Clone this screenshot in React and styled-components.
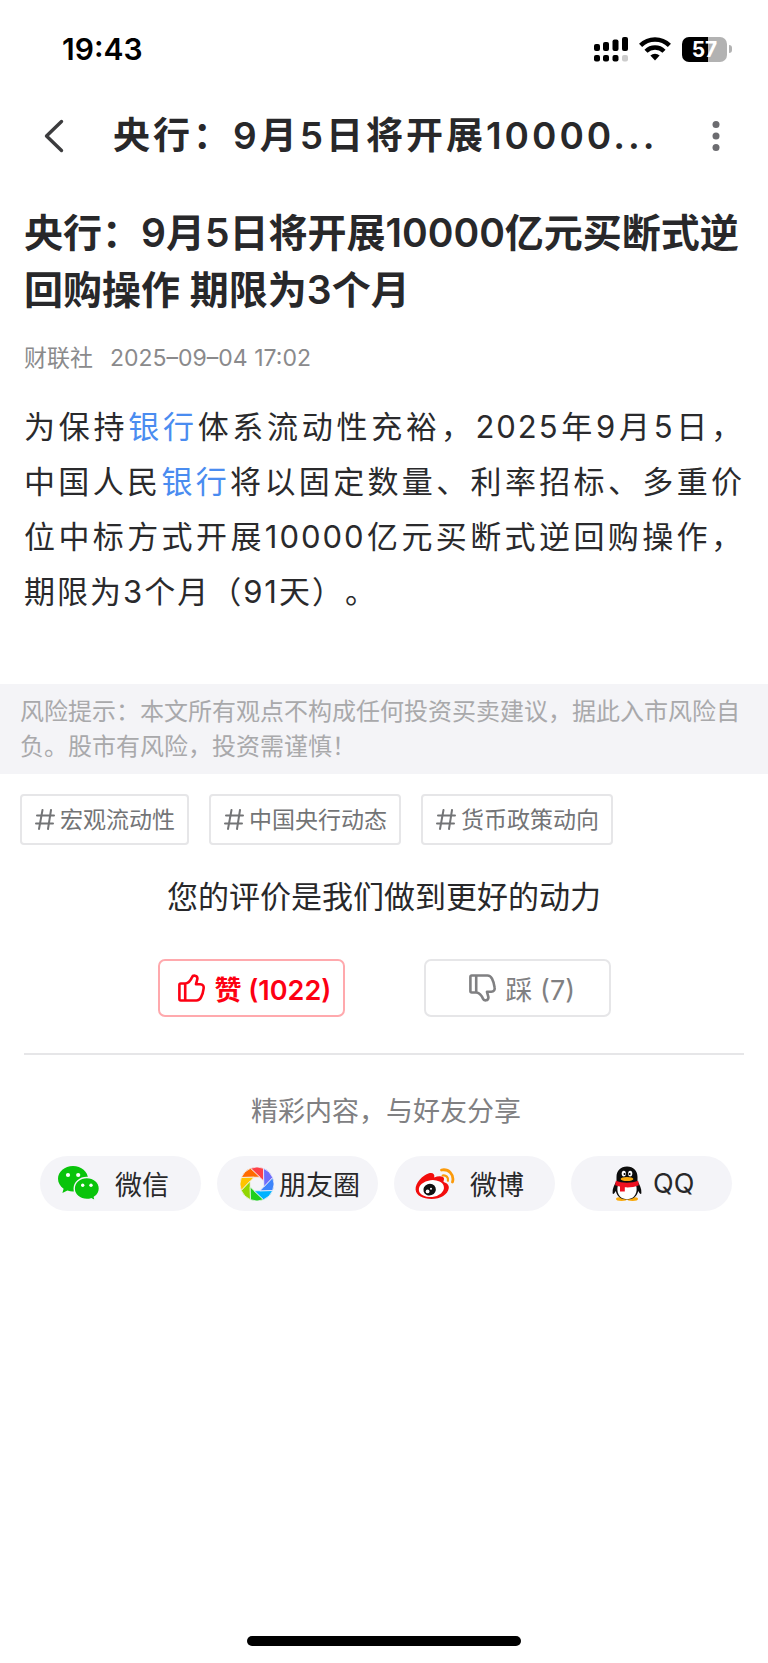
import React from "react";
import styled, { createGlobalStyle } from "styled-components";

const title = "央行：9月5日将开展10000亿元买断式逆回购操作 期限为3个月";
const tags = ["宏观流动性", "中国央行动态", "货币政策动向"];

const GlobalStyle = createGlobalStyle`
  * {
    box-sizing: border-box;
  }
  body {
    margin: 0;
    background: #fff;
    color: #28282a;
    font-family: Inter, "Noto Sans CJK SC", sans-serif;
    text-spacing-trim: space-all;
  }
  h1, h2, p {
    margin: 0;
    font-weight: 400;
  }
  button {
    font-family: inherit;
    color: inherit;
    cursor: pointer;
  }
  svg {
    display: block;
    flex: none;
  }
`;

const SignalIcon = () => (
  <svg width="34" height="25" viewBox="0 0 34 25">
    <rect x="0" y="7" width="6" height="7" rx="2" />
    <rect x="9" y="5" width="6" height="9" rx="2" />
    <rect x="18.5" y="2.5" width="6" height="11.5" rx="2" />
    <rect x="28" y="0" width="6" height="14" rx="2" />
    <rect x="0" y="18" width="6" height="6.5" rx="2" />
    <rect x="9" y="18" width="6" height="6.5" rx="2" />
    <rect x="18.5" y="18" width="6" height="6.5" rx="2" />
    <rect x="28" y="18" width="6" height="6.5" rx="2" fill="#ccc" />
  </svg>
);

const WifiIcon = () => (
  <svg width="32" height="24" viewBox="0 0 32 24">
    <g fill="none" stroke="#000" strokeWidth="4.4">
      <path d="M1.6 8.4a20.4 20.4 0 0 1 28.8 0" />
      <path d="M7 14.2a12.8 12.8 0 0 1 18 0" />
    </g>
    <path d="M11.4 18.5a6.6 6.6 0 0 1 9.2 0L16 23.4z" />
  </svg>
);

const BackIcon = () => (
  <svg width="20" height="34" viewBox="0 0 20 34">
    <path d="M17.5 2.5 2.5 17l15 14.5" fill="none" stroke="#3c3c3e" strokeWidth="3.4" strokeLinecap="round" strokeLinejoin="round" />
  </svg>
);

const MoreIcon = () => (
  <svg width="8" height="32" viewBox="0 0 8 32" fill="#6c6c70">
    <circle cx="4" cy="4.5" r="3.5" />
    <circle cx="4" cy="16" r="3.5" />
    <circle cx="4" cy="27.5" r="3.5" />
  </svg>
);

const HashIcon = () => (
  <svg width="20" height="22" viewBox="0 0 20 22">
    <path d="M7.5 1 4 20M16 1l-3 19M2 6.5h17M1 14.5h17" fill="none" stroke="#737476" strokeWidth="2" strokeLinecap="round" />
  </svg>
);

const ThumbIcon = ({ down }) => (
  <svg width="27" height="28" viewBox="0 0 27 28">
    <path
      transform={down ? "matrix(1 0 0 -1 0 28)" : undefined}
      d="M2.8 9.5H7.5C11 8.8 12.6 6.6 14 3.2 14.8 1 19.6.8 19.4 4.8L18 10.2h4.2q4 .4 3.4 4.4-.6 5-2.6 8.8-1.6 3.1-4.6 3.1H2.8q-1.4 0-1.4-1.5V11q0-1.5 1.4-1.5zM7.2 9.6v16.9"
      fill="none"
      stroke="currentColor"
      strokeWidth="2.6"
      strokeLinejoin="round"
    />
  </svg>
);

const WechatIcon = () => (
  <svg width="42" height="35" viewBox="0 0 42 35">
    <g fill="#09c40b">
      <path d="M15 0C6.7 0 0 5.7 0 12.8c0 4 2.2 7.6 5.6 9.9L4.4 27l5-2.5c1.8.6 3.6.9 5.6.9 8.3 0 15-5.6 15-12.6S23.3 0 15 0z" />
      <path d="M28.8 11.5c-7 0-12.6 4.9-12.6 11s5.6 11 12.6 11c1.6 0 3-.2 4.4-.7l4.2 2.1-1-3.7c3.1-2 5-5.2 5-8.7 0-6.1-5.600-11-12.600-11z" stroke="#f4f4f8" strokeWidth="1.4" />
    </g>
    <g fill="#fff">
      <circle cx="10" cy="9" r="2.1" />
      <circle cx="20.2" cy="9" r="2.1" />
      <circle cx="24.7" cy="19.2" r="1.7" />
      <circle cx="33" cy="19.2" r="1.7" />
    </g>
  </svg>
);

const bladeColors = ["#fd4048", "#ff6a00", "#ffc300", "#92d600", "#1fd01f", "#00b2ff", "#3d84fb", "#6f6dfb"];

// Point at the given radius and counter-clockwise angle around the aperture's centre
const polar = (radius, degrees) => {
  const angle = (degrees * Math.PI) / 180;
  return `${(17 + radius * Math.cos(angle)).toFixed(2)} ${(17 - radius * Math.sin(angle)).toFixed(2)}`;
};

const MomentsIcon = () => (
  <svg width="34" height="34" viewBox="0 0 34 34">
    {bladeColors.map((color, k) => (
      <path
        key={color}
        d={`M${polar(7.4, 22.5 + 45 * k)}L${polar(17, 67.5 + 45 * k)}A17 17 0 0 0 ${polar(17, 112.5 + 45 * k)}Z`}
        fill={color}
        stroke="#f4f4f8"
        strokeWidth="0.8"
      />
    ))}
  </svg>
);

const WeiboIcon = () => (
  <svg width="40" height="32" viewBox="0 0 40 32">
    <path d="M.6 21.5C.2 15 7.5 7 14 5.2c3.6-1 6 .6 5.2 4.2 4-1.6 9.4-1.8 9.8 1.2.2 1.6-.8 2.6-.4 3.4 3.4 1 5.6 3.2 5.2 6C33 26.5 25.5 31 16.5 31 8 31 1 27.5.6 21.5z" fill="#f20d0d" />
    <ellipse cx="16.4" cy="20.6" rx="12.6" ry="8.4" fill="#fff" transform="rotate(-7 16.4 20.6)" />
    <ellipse cx="14.6" cy="21.6" rx="6.3" ry="5.8" fill="#111" transform="rotate(-20 14.6 21.6)" />
    <circle cx="12.6" cy="23.4" r="1.9" fill="#fff" />
    <circle cx="16" cy="20.8" r="1" fill="#fff" />
    <g fill="none" stroke="#fb9a0b" strokeLinecap="round">
      <path d="M26.5 2c7-1.5 13 4.5 11 12" strokeWidth="2.8" />
      <path d="M27.7 7.5c3.300-.7 6 2 5.200 5.200" strokeWidth="2.2" />
    </g>
  </svg>
);

const QqIcon = () => (
  <svg width="30" height="36" viewBox="0 0 30 36">
    <ellipse cx="9.5" cy="33" rx="5.5" ry="1.9" fill="#f9a90c" />
    <ellipse cx="20.5" cy="33" rx="5.5" ry="1.9" fill="#f9a90c" />
    <path d="M15 .5C8.5.5 4.5 5 4.5 11v4C2.5 18.5.2 22.5.6 27c.2 2 1.6.8 3.2-2 1 5 5 8.5 11.2 8.5S25.2 30 26.2 25c1.6 2.8 3 4 3.2 2 .4-4.5-1.9-8.5-3.9-12v-4C25.5 5 21.5.5 15 .5z" fill="#0d0d0d" />
    <path d="M6.2 18.5h17.6c2.6 7-.8 14.7-8.8 14.7S3.6 25.500 6.200 18.500z" fill="#fff" />
    <path d="M3.800 14.800c6 2.600 16.400 2.600 22.400 0l.6 4.400c-4.500 2-9.500 2.400-14 2.100v4.200H8v-5c-1.800-.3-3.600-.8-4.800-1.300z" fill="#ee1020" />
    <ellipse cx="11.8" cy="7.6" rx="2.1" ry="2.9" fill="#fff" />
    <ellipse cx="18.2" cy="7.6" rx="2.1" ry="2.9" fill="#fff" />
    <circle cx="12.5" cy="8" r="1" />
    <circle cx="17.6" cy="8" r="1" />
    <ellipse cx="15" cy="13" rx="6.4" ry="2" fill="#f9a90c" />
  </svg>
);

const App = () => {
  return (
    <Page>
      <GlobalStyle />
      <StatusBar>
        <time>19:43</time>
        <StatusIcons>
          <SignalIcon />
          <WifiIcon />
          <Battery>
            <BatteryLevel>57</BatteryLevel>
            <BatteryTip />
          </Battery>
        </StatusIcons>
      </StatusBar>

      <NavBar>
        <IconButton type="button" aria-label="返回">
          <BackIcon />
        </IconButton>
        <NavTitle>{title.slice(0, 15)}...</NavTitle>
        <IconButton type="button" aria-label="更多">
          <MoreIcon />
        </IconButton>
      </NavBar>

      <Article>
        <Headline>{title}</Headline>
        <Meta>
          <span>财联社</span>
          <time>2025–09–04 17:02</time>
        </Meta>
        <Body>
          为保持<a href="#bank">银行</a>体系流动性充裕，2025年9月5日，中国人民<a href="#bank">银行</a>
          将以固定数量、利率招标、多重价位中标方式开展10000亿元买断式逆回购操作，期限为3个月（91天）。
        </Body>
      </Article>

      <Notice>风险提示：本文所有观点不构成任何投资买卖建议，据此入市风险自负。股市有风险，投资需谨慎！</Notice>

      <Tags>
        {tags.map((tag) => (
          <Tag key={tag} href="#tag">
            <HashIcon />
            {tag}
          </Tag>
        ))}
      </Tags>

      <Rating>
        <RatingTitle>您的评价是我们做到更好的动力</RatingTitle>
        <RatingButtons>
          <RateButton type="button" $active>
            <ThumbIcon />
            赞 (1022)
          </RateButton>
          <RateButton type="button">
            <ThumbIcon down />
            踩 (7)
          </RateButton>
        </RatingButtons>
      </Rating>

      <Share>
        <ShareTitle>精彩内容，与好友分享</ShareTitle>
        <ShareList>
          <ShareButton type="button" $left={18} $gap={15}>
            <WechatIcon />
            微信
          </ShareButton>
          <ShareButton type="button" $left={23} $gap={5}>
            <MomentsIcon />
            朋友圈
          </ShareButton>
          <ShareButton type="button" $left={21} $gap={15}>
            <WeiboIcon />
            微博
          </ShareButton>
          <ShareButton type="button" $left={41} $gap={11}>
            <QqIcon />
            QQ
          </ShareButton>
        </ShareList>
      </Share>

      <HomeIndicator />
    </Page>
  );
};

const Page = styled.main`
  min-height: 100vh;
  display: flex;
  flex-direction: column;
`;

const StatusBar = styled.div`
  height: 98px;
  padding: 0 36px 0 62px;
  display: flex;
  align-items: center;
  justify-content: space-between;
  color: #000;
  font-size: 30px;
  font-weight: 600;
`;

const StatusIcons = styled.div`
  display: flex;
  align-items: center;
  gap: 11px;
`;

const Battery = styled.div`
  display: flex;
  align-items: center;
  gap: 2px;
`;

const BatteryLevel = styled.span`
  width: 45px;
  height: 25px;
  border-radius: 7px;
  background: linear-gradient(to right, #000 57%, #b2b2b2 57%);
  color: #fff;
  font-size: 21px;
  font-weight: 700;
  line-height: 25px;
  text-align: center;
`;

const BatteryTip = styled.span`
  width: 3px;
  height: 8px;
  border-radius: 0 4px 4px 0;
  background: #b2b2b2;
`;

const NavBar = styled.header`
  height: 76px;
  padding: 0 32px 0 34px;
  display: flex;
  align-items: center;
`;

const IconButton = styled.button`
  width: 40px;
  height: 56px;
  padding: 0;
  flex: none;
  display: grid;
  place-items: center;
  border: 0;
  background: none;
`;

const NavTitle = styled.h2`
  flex: 1;
  min-width: 0;
  margin: 0 24px 0 39px;
  overflow: hidden;
  white-space: nowrap;
  font-size: 37px;
  font-weight: 600;
  line-height: 56px;
  letter-spacing: 3px;
`;

const Article = styled.article`
  padding: 30px 24px 65px;
`;

const Headline = styled.h1`
  font-size: 39px;
  font-weight: 600;
  line-height: 57px;
`;

const Meta = styled.div`
  margin-top: 23px;
  display: flex;
  gap: 17px;
  color: #8a8a8c;
  font-size: 23px;
  line-height: 34px;
`;

const Body = styled.p`
  margin-top: 24px;
  color: #2a2a2c;
  font-size: 31px;
  line-height: 55px;
  letter-spacing: 2px;
  text-align: justify;

  a {
    color: #4a8cf0;
    text-decoration: none;
  }
`;

const Notice = styled.p`
  padding: 10px 20px;
  background: #f4f4f7;
  color: #a9a9ab;
  font-size: 24px;
  line-height: 35px;
`;

const Tags = styled.div`
  padding: 20px 20px 0;
  display: flex;
  flex-wrap: wrap;
  gap: 20px;
`;

const Tag = styled.a`
  height: 51px;
  padding: 0 12px 0 13px;
  display: flex;
  align-items: center;
  gap: 5px;
  border: 2px solid #e6e6e8;
  border-radius: 4px;
  color: #737476;
  font-size: 23px;
  line-height: 32px;
  text-decoration: none;
`;

const Rating = styled.section`
  margin: 0 24px;
  padding: 30px 0 36px;
  border-bottom: 2px solid #e6e6e8;
  text-align: center;
`;

const RatingTitle = styled.h2`
  font-size: 31px;
  line-height: 44px;
`;

const RatingButtons = styled.div`
  margin-top: 40px;
  display: flex;
  justify-content: center;
  gap: 79px;
`;

const RateButton = styled.button`
  width: 187px;
  height: 58px;
  padding: 0 0 0 ${(props) => (props.$active ? "18px" : "43px")};
  display: flex;
  align-items: center;
  gap: 10px;
  border: 2px solid ${(props) => (props.$active ? "#ffa9ad" : "#e6e6e8")};
  border-radius: 7px;
  background: none;
  color: ${(props) => (props.$active ? "#fd0012" : "#808082")};
  font-size: 27px;
  font-weight: ${(props) => (props.$active ? 600 : 400)};
  white-space: nowrap;
`;

const Share = styled.section`
  padding: 37px 36px 0 40px;
`;

const ShareTitle = styled.h2`
  color: #808082;
  font-size: 27px;
  line-height: 40px;
  text-align: center;
`;

const ShareList = styled.div`
  margin-top: 24px;
  display: grid;
  grid-template-columns: repeat(4, 1fr);
  gap: 16px;
`;

const ShareButton = styled.button`
  height: 55px;
  padding: 0 0 0 ${(props) => props.$left}px;
  display: flex;
  align-items: center;
  gap: ${(props) => props.$gap}px;
  border: 0;
  border-radius: 28px;
  background: #f4f4f8;
  font-size: 27px;
  white-space: nowrap;
`;

const HomeIndicator = styled.div`
  width: 274px;
  height: 10px;
  margin: auto auto 17px;
  border-radius: 5px;
  background: #000;
`;

export default App;
